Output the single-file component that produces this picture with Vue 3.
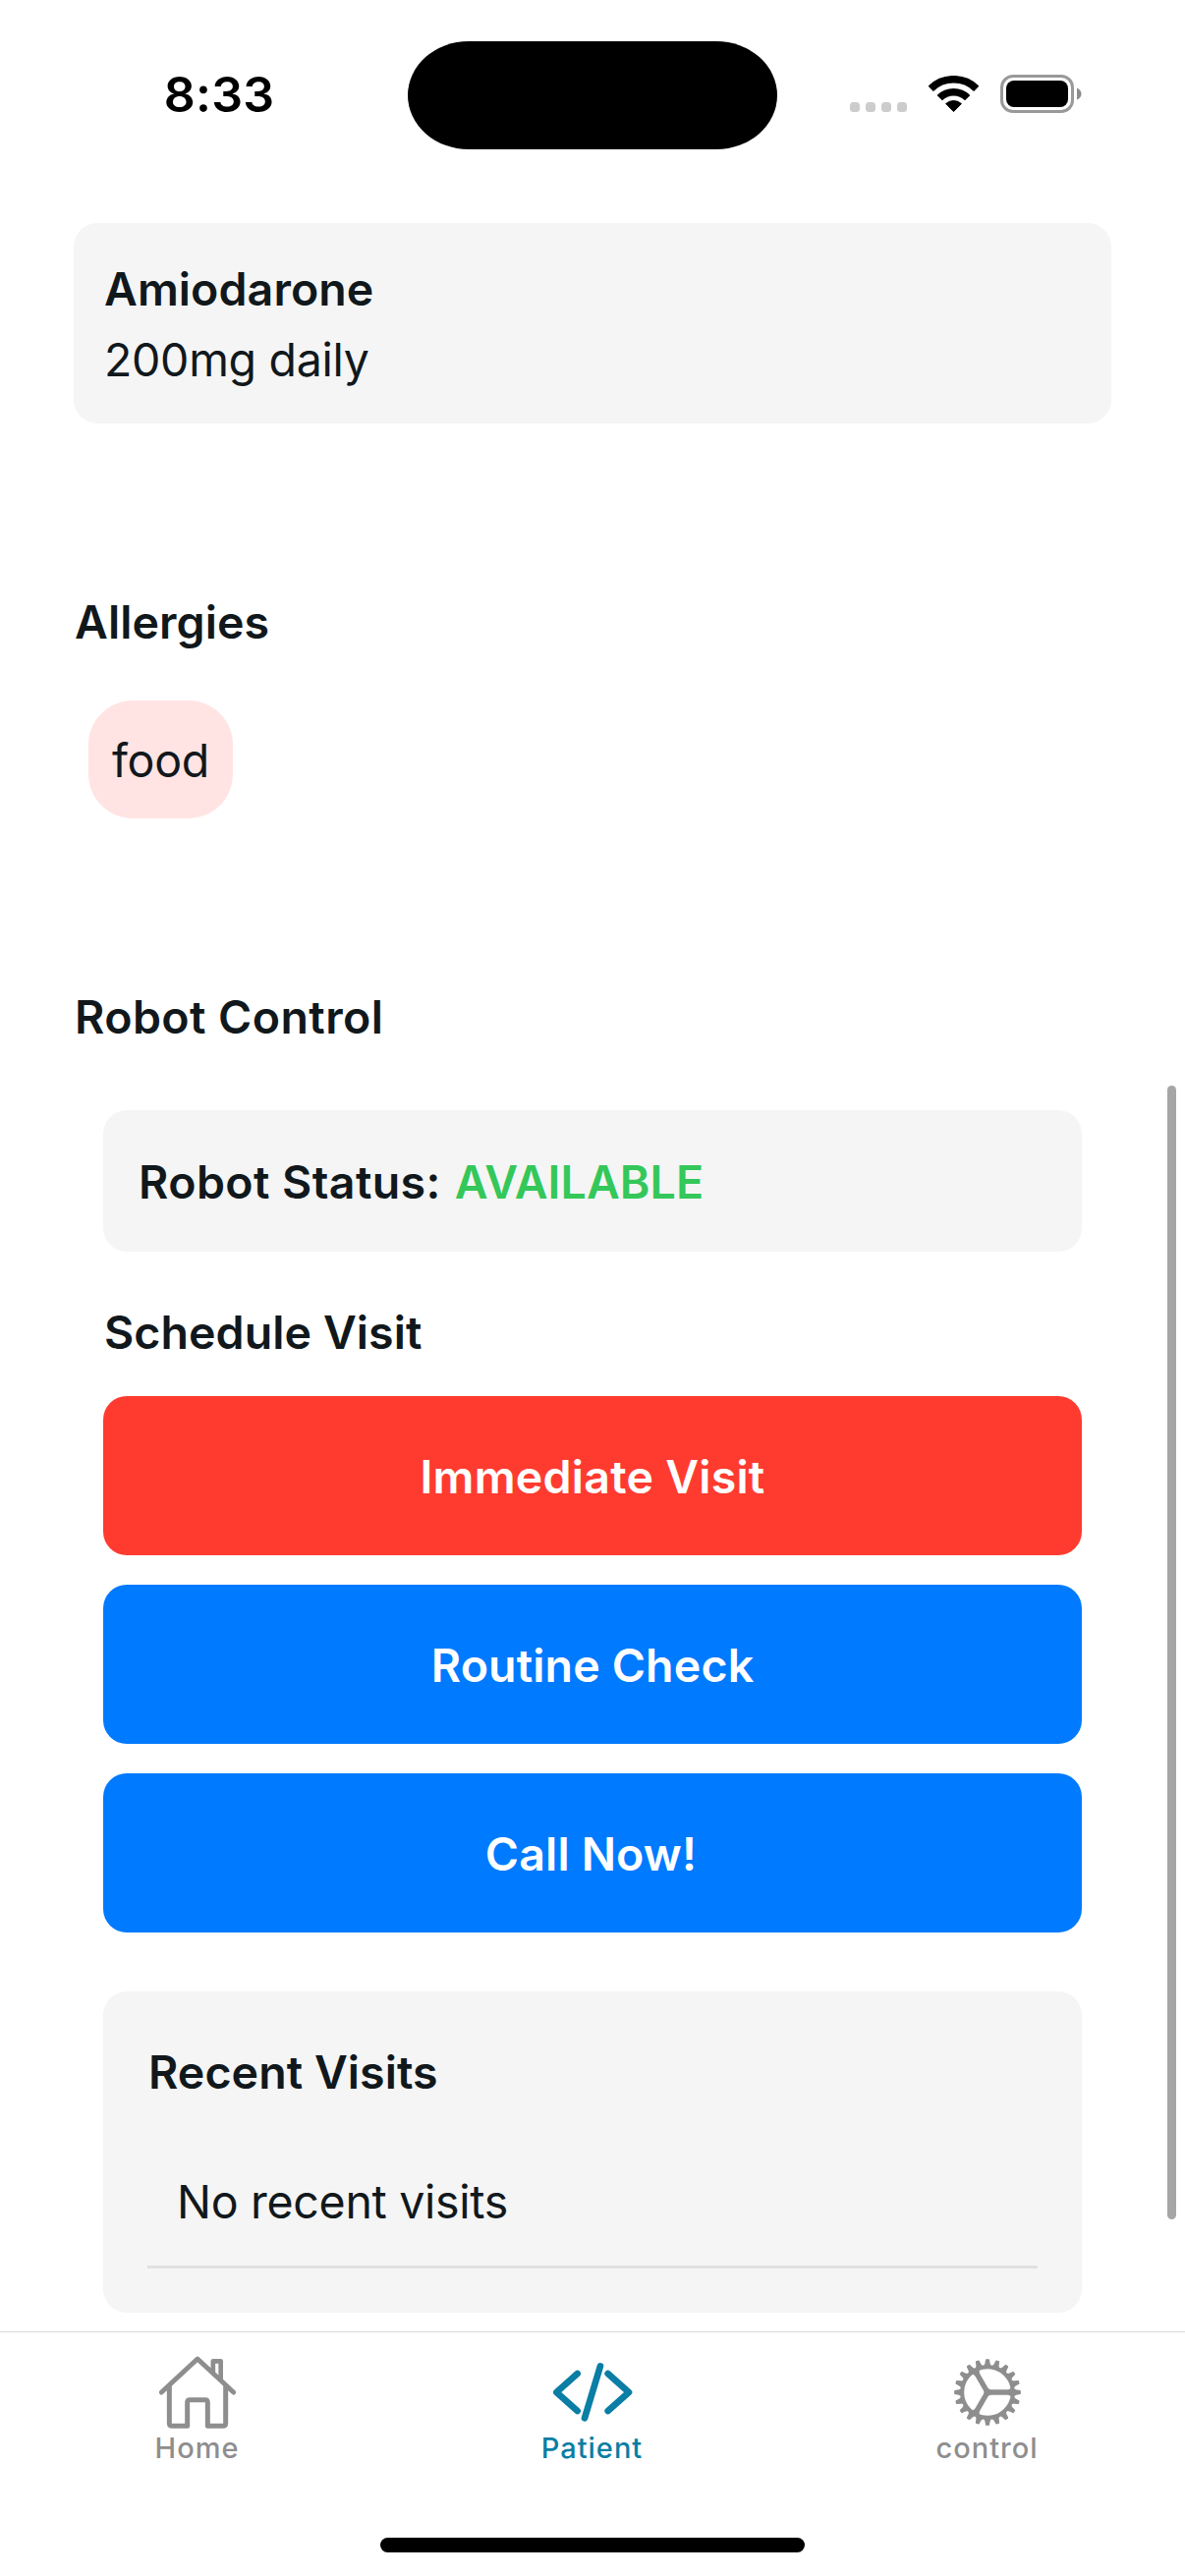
<script setup>
const medication = { name: 'Amiodarone', dose: '200mg daily' }
const allergies = ['food']
const actions = [
  { label: 'Immediate Visit', kind: 'urgent' },
  { label: 'Routine Check', kind: 'normal' },
  { label: 'Call Now!', kind: 'call' },
]
const teeth = Array.from({ length: 20 }, (_, i) => i * 18)
</script>

<template>
  <div class="screen">
    <header class="status-bar">
      <div class="time">8:33</div>
      <div class="island"></div>
      <div class="indicators">
        <div class="dots"><i v-for="n in 4" :key="n"></i></div>
        <svg class="wifi" width="51" height="37" viewBox="0 0 51 37">
          <g fill="none" stroke="#000" stroke-width="7.6">
            <path d="M2.2 13.3A33.2 33.2 0 0 1 48.8 13.3" />
            <path d="M11.3 22.6A20.2 20.2 0 0 1 39.7 22.6" />
          </g>
          <path d="M17.6 28.6A11.7 11.7 0 0 1 33.4 28.6L25.5 36.6Z" stroke="#000" stroke-width="1" stroke-linejoin="round" />
        </svg>
        <svg class="battery" width="83" height="39" viewBox="0 0 83 39">
          <rect x="1.5" y="1.5" width="72" height="36" rx="11.5" fill="none" stroke="#999" stroke-width="3" />
          <rect x="6" y="6" width="63" height="27" rx="8" />
          <path d="M78 13.5Q82.500 15.500 82.500 19.500T78 25.500Z" fill="#8c8c8c" />
        </svg>
      </div>
    </header>

    <main class="content">
      <section class="medication">
        <p class="strong">{{ medication.name }}</p>
        <p>{{ medication.dose }}</p>
      </section>

      <h2>Allergies</h2>
      <div class="chips">
        <span v-for="a in allergies" :key="a" class="chip">{{ a }}</span>
      </div>

      <h2 class="wide">Robot Control</h2>
      <section class="robot">
        <div class="status-card strong">
          <span class="wide">Robot Status:</span>
          <span class="status-value">AVAILABLE</span>
        </div>
        <h3>Schedule Visit</h3>
        <div class="actions">
          <button v-for="b in actions" :key="b.label" :class="b.kind">{{ b.label }}</button>
        </div>
        <div class="visits">
          <h3>Recent Visits</h3>
          <p class="visit">No recent visits</p>
        </div>
      </section>
    </main>

    <nav class="tabs">
      <a class="tab">
        <svg width="84" height="84" viewBox="57 69 252 252" fill="none" stroke="currentColor" stroke-width="15" stroke-linecap="round" stroke-linejoin="round">
          <path d="M73 195L183 93L293 195" />
          <path d="M97 178V289Q97 298 106 298H152V226Q152 218 160 218H206Q214 218 214 226V298H260Q269 298 269 289V178" />
          <path d="M230.500 132V100H254V155" stroke-width="14" />
        </svg>
        <span>Home</span>
      </a>
      <a class="tab active">
        <svg width="84" height="84" viewBox="93 69 252 252" fill="none" stroke="currentColor" stroke-width="20" stroke-linecap="round" stroke-linejoin="round">
          <path d="M173 138L109 195L173 252" />
          <path d="M243 115L195 274" />
          <path d="M266 138L330 195L266 252" />
        </svg>
        <span>Patient</span>
      </a>
      <a class="tab">
        <svg width="84" height="84" viewBox="-126 -126 252 252" fill="none" stroke="currentColor">
          <circle r="77.500" stroke-width="12" />
          <path d="M0 0H74M0 0L-37 -64M0 0L-37 64" stroke-width="16" />
          <circle r="11" fill="currentColor" stroke="none" />
          <path d="M72 -13L62 -7V7L72 13ZM-24.700 -68.900L-25 -56L-37 -50L-47.300 -55.900ZM-24.700 68.900L-25 56L-37 50L-47.300 55.900Z" fill="currentColor" stroke="none" />
          <path
            v-for="deg in teeth"
            :key="deg"
            :transform="`rotate(${deg})`"
            d="M80 -10Q84 -7 88 -6L99.500 -3.800V3.800L88 6Q84 7 80 10Z"
            fill="currentColor"
            stroke-width="4"
            stroke-linejoin="round"
          />
        </svg>
        <span>control</span>
      </a>
    </nav>
    <div class="home-indicator"></div>
    <div class="scrollbar"></div>
  </div>
</template>

<style>
body {
  background: #fff;
}
</style>

<style scoped>
.screen {
  position: relative;
  box-sizing: border-box;
  width: 1206px;
  height: 2622px;
  overflow: hidden;
  display: flex;
  flex-direction: column;
  align-items: stretch;
  background: #fff;
  color: #11181c;
  font-family: Inter, "Liberation Sans", sans-serif;
  font-size: 46.5px;
  line-height: 72px;
  letter-spacing: -0.3px;
}
p, h2, h3 {
  margin: 0;
  font-size: inherit;
}
h2, h3, .strong {
  font-weight: 600;
  letter-spacing: 0.08px;
}
.wide {
  letter-spacing: 0.42px;
}
.status-bar {
  box-sizing: border-box;
  height: 227px;
  flex: none;
  padding-top: 42px;
  display: grid;
  grid-template-columns: 415px 376px 1fr;
  align-items: start;
  color: #000;
}
.time {
  padding-left: 31px;
  height: 110px;
  line-height: 109px;
  text-align: center;
  font-size: 50px;
  font-weight: 600;
  letter-spacing: 0.2px;
}
.island {
  height: 110px;
  border-radius: 62px / 55px;
  background: #000;
}
.indicators {
  display: flex;
  align-items: flex-end;
  padding: 34px 0 0 74px;
}
.dots {
  display: flex;
  gap: 6px;
  margin: 0 22px 1px 0;
}
.dots i {
  width: 10px;
  height: 10px;
  border-radius: 3.5px;
  background: #ccc;
}
.wifi {
  margin: 0 22px 1px 0;
}
.content {
  flex: none;
  height: 2146px;
  padding: 0 75px;
}
.medication {
  height: 144px;
  padding: 31px 30px 29px 31px;
  border-radius: 24px;
  background: #f5f5f5;
}
h2 {
  margin-top: 165px;
  padding: 1px 0 0 1px;
}
.chips {
  display: flex;
  padding: 44px 15px 0;
}
.chip {
  box-sizing: border-box;
  width: 147px;
  padding: 25px 0 23px;
  text-align: center;
  border-radius: 45px;
  background: #ffe4e3;
}
.robot {
  margin: 59px 30px 0;
}
.status-card {
  display: flex;
  gap: 14px;
  padding: 37px 36px 35px;
  margin-bottom: 45px;
  border-radius: 24px;
  background: #f5f5f5;
}
.status-value {
  color: #34c759;
}
.robot h3 {
  padding: 1px 0 0 1px;
}
.actions {
  display: flex;
  flex-direction: column;
  gap: 30px;
  margin-top: 29px;
}
button {
  height: 162px;
  border: 0;
  padding: 1px 0 0;
  border-radius: 24px;
  font: inherit;
  font-weight: 600;
  letter-spacing: 0.15px;
  color: #fff;
  background: #007aff;
}
button.urgent {
  letter-spacing: 0.25px;
  background: #ff3b30;
}
button.call {
  padding-right: 3px;
}
.visits {
  margin-top: 60px;
  padding: 45px;
  border-radius: 24px;
  background: #f5f5f5;
}
.visit {
  margin-top: 30px;
  padding: 30px 30px 29px;
  border-bottom: 3px solid #e0e0e0;
}
.tabs {
  flex: none;
  display: flex;
  border-top: 1px solid #d8d8d8;
  padding-top: 19px;
}
.tab {
  flex: 1;
  display: flex;
  flex-direction: column;
  align-items: center;
  color: #8e8e8f;
  font-size: 29px;
  font-weight: 500;
  line-height: 36px;
  letter-spacing: 1px;
}
.tab span {
  margin: -3px 1px 0 0;
}
.tab.active {
  color: #0a7ea4;
}
.home-indicator {
  width: 432px;
  height: 15px;
  margin: 73px auto 0;
  border-radius: 8px;
  background: #000;
}
.scrollbar {
  position: absolute;
  left: 1188px;
  top: 1105px;
  width: 9px;
  height: 1154px;
  border-radius: 4.5px;
  background: #a6a6a6;
}
</style>
